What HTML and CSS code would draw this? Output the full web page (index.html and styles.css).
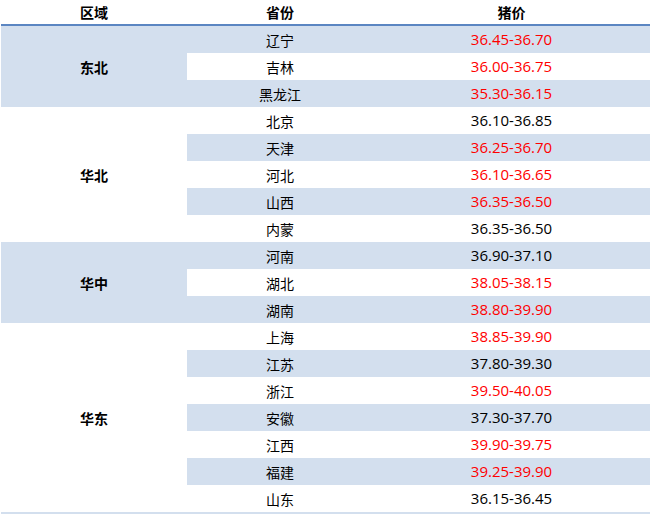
FILE: index.html
```html
<!DOCTYPE html>
<html lang="zh">
<head>
<meta charset="utf-8">
<link rel="stylesheet" href="styles.css">
</head>
<body>
<table class="price-table">
  <colgroup>
    <col class="c-region">
    <col class="c-prov">
    <col class="c-price">
  </colgroup>
  <thead>
    <tr><th>区域</th><th>省份</th><th>猪价</th></tr>
  </thead>
  <tbody>
    <tr class="band"><td class="region band" rowspan="3">东北</td><td>辽宁</td><td class="num red">36.45-36.70</td></tr>
    <tr><td>吉林</td><td class="num red">36.00-36.75</td></tr>
    <tr class="band"><td>黑龙江</td><td class="num red">35.30-36.15</td></tr>
    <tr><td class="region" rowspan="5">华北</td><td>北京</td><td class="num">36.10-36.85</td></tr>
    <tr class="band"><td>天津</td><td class="num red">36.25-36.70</td></tr>
    <tr><td>河北</td><td class="num red">36.10-36.65</td></tr>
    <tr class="band"><td>山西</td><td class="num red">36.35-36.50</td></tr>
    <tr><td>内蒙</td><td class="num">36.35-36.50</td></tr>
    <tr class="band"><td class="region band" rowspan="3">华中</td><td>河南</td><td class="num">36.90-37.10</td></tr>
    <tr><td>湖北</td><td class="num red">38.05-38.15</td></tr>
    <tr class="band"><td>湖南</td><td class="num red">38.80-39.90</td></tr>
    <tr><td class="region" rowspan="7">华东</td><td>上海</td><td class="num red">38.85-39.90</td></tr>
    <tr class="band"><td>江苏</td><td class="num">37.80-39.30</td></tr>
    <tr><td>浙江</td><td class="num red">39.50-40.05</td></tr>
    <tr class="band"><td>安徽</td><td class="num">37.30-37.70</td></tr>
    <tr><td>江西</td><td class="num red">39.90-39.75</td></tr>
    <tr class="band"><td>福建</td><td class="num red">39.25-39.90</td></tr>
    <tr><td>山东</td><td class="num">36.15-36.45</td></tr>
  </tbody>
</table>
</body>
</html>
```

FILE: styles.css
```css
html, body {
  margin: 0;
  padding: 0;
  background: #ffffff;
}

body {
  padding: 0 1px;
  font-family: "Liberation Sans", "Noto Sans CJK SC", sans-serif;
  color: #000000;
}

.price-table {
  border-collapse: collapse;
  width: 649px;
  table-layout: fixed;
  border-bottom: 2px solid #d3dfee;
}

.c-region { width: 186px; }
.c-prov { width: 186px; }
.c-price { width: 277px; }

.price-table th {
  height: 24px;
  padding: 0;
  font-family: "Noto Sans CJK SC", sans-serif;
  font-size: 14px;
  font-weight: bold;
  text-align: center;
  vertical-align: middle;
  border-bottom: 2px solid #5b86c2;
  line-height: 1;
}

.price-table td {
  height: 27px;
  padding: 0;
  text-align: center;
  vertical-align: middle;
  font-family: "Noto Sans CJK SC", sans-serif;
  font-size: 14px;
  line-height: 1;
}

.price-table tr.band td,
.price-table td.band {
  background: #d3dfee;
}

.price-table td.region {
  background: #ffffff;
  font-weight: bold;
}

.price-table td.region.band {
  background: #d3dfee;
}

.price-table td.num {
  font-family: "Open Sans", "Liberation Sans", sans-serif;
  font-size: 15px;
}

.price-table td.red {
  color: #ff0000;
}
```
